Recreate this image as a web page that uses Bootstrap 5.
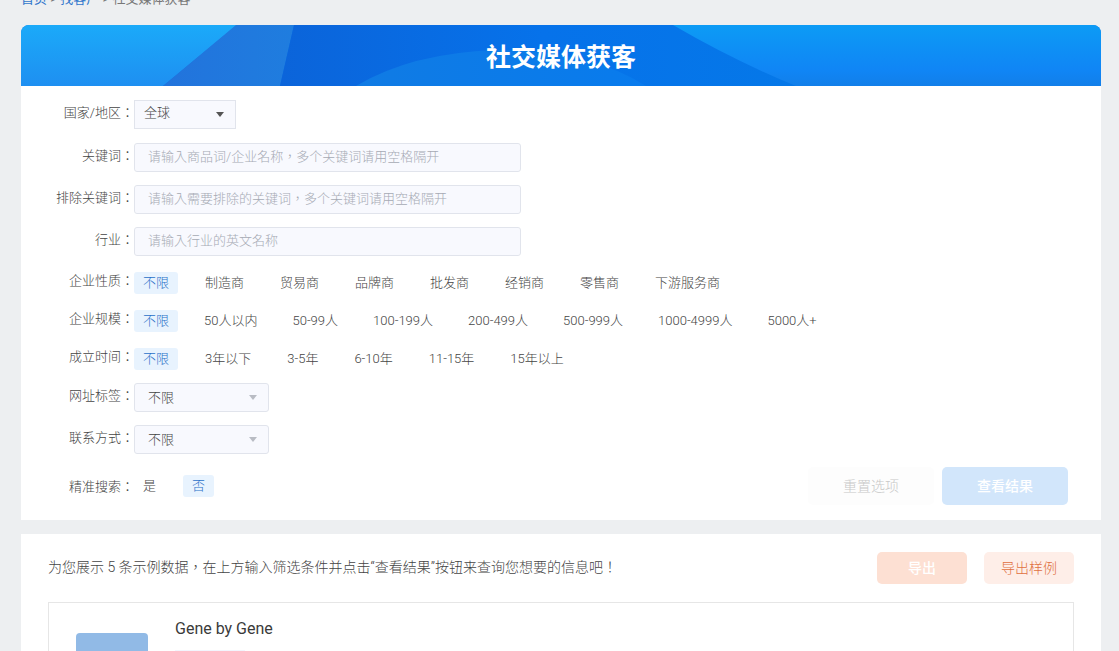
<!DOCTYPE html>
<html>
<head>
<meta charset="utf-8">
<meta name="viewport" content="width=device-width, initial-scale=1">
<title>社交媒体获客</title>
<link href="https://cdn.jsdelivr.net/npm/bootstrap@5.3.0/dist/css/bootstrap.min.css" rel="stylesheet">
<style>
  body { background: #edeff1; color: #444; font: 300 13px/22px Roboto, "Noto Sans CJK SC", sans-serif; }
  .mb-13 { margin-bottom: 13px; }
  .mb-14 { margin-bottom: 14px; }
  .page-wrap { padding: 0 18px 0 21px; }
  .crumbs { height: 25px; line-height: 20px; margin-top: -11px; margin-bottom: 11px; color: #777; font-weight: 400; }
  .crumbs a { color: #3277cc; text-decoration: none; }
  .banner { height: 61px; border-radius: 8px 8px 0 0; background: #0670e8; }
  .banner h1 { font-size: 25px; line-height: 66px; font-weight: 700; color: #fff; }
  .panel { background: #fff; }
  .filters { padding: 14px 33px 15px 0; }
  .field-label { width: 113px; flex: none; text-align: right; line-height: 24px; }
  .chip-row .field-label { line-height: 16px; }
  .colon { font-family: "Noto Sans CJK TC", sans-serif; }
  .field { height: 29px; border: 1px solid #e1e4ec; border-radius: 3px; background-color: #f8f9fe; color: #444; font-size: 13px; line-height: 19px; padding: 3px 13px 5px; font-weight: 300; }
  .field:focus { background-color: #f8f9fe; box-shadow: none; }
  .field::placeholder { color: #a6aab4; opacity: 1; font-family: Roboto, "Noto Sans CJK TC", sans-serif; }
  .text-field { width: 387px; }
  .pick { width: 135px; padding: 4px 24px 4px 13px; background-size: 8px 5px; background-position: right 11px center;
    background-image: url("data:image/svg+xml,%3Csvg xmlns='http://www.w3.org/2000/svg' viewBox='0 0 8 5'%3E%3Cpath d='M0 0h8L4 5z' fill='%23b9bcc4'/%3E%3C/svg%3E"); }
  .pick-country { width: 102px; padding: 2px 24px 6px 9px; border-radius: 0;
    background-image: url("data:image/svg+xml,%3Csvg xmlns='http://www.w3.org/2000/svg' viewBox='0 0 8 5'%3E%3Cpath d='M0 0h8L4 5z' fill='%23555555'/%3E%3C/svg%3E"); }
  .chips { gap: 0 18px; }
  .chips-tight { gap: 0 17px; }
  .chip { padding: 0 9px; line-height: 22px; border-radius: 3px; cursor: pointer; }
  .btn-check:checked + .chip { background: #e8f3fe; color: #2a70c8; }
  .act { border: 0; border-radius: 5px; padding: 0; font-size: 14px; line-height: 20px; }
  .act:disabled { opacity: 1; }
  .act-lg { width: 126px; height: 38px; }
  .act-sm { width: 90px; height: 32px; }
  .act-reset, .act-reset:disabled { background: #fdfdfd; color: #c8c8c8; font-weight: 300; }
  .act-search, .act-search:disabled { background: #d2e6fb; color: #fff; font-weight: 500; }
  .act-export, .act-export:disabled { background: #fde0d3; color: #fff; font-weight: 500; }
  .act-sample, .act-sample:hover { background: #feeee8; color: #e07040; font-weight: 300; }
  .results { margin-top: 14px; padding: 18px 27px; }
  .summary { font-size: 14px; line-height: 28px; }
  .export-bar { gap: 17px; }
  .result-item { border: 1px solid #e6e6e6; margin-top: 18px; padding: 15px 27px; height: 150px; }
  .thumb { width: 72px; height: 72px; margin-top: 15px; border-radius: 4px; background: #91bae6; }
  .item-body { margin-left: 27px; }
  .item-name { font-size: 16px; line-height: 22px; color: #3a3a3a; font-weight: 400; }
  .item-tag { width: 70px; height: 22px; margin-top: 10px; background: #f2f5fd; }
</style>
</head>
<body class="vh-100 overflow-hidden">
<div class="page-wrap">
  <nav class="crumbs" aria-label="breadcrumb"><a href="#">首页</a> &gt; <a href="#">找客户</a> &gt; 社交媒体获客</nav>

  <main>
    <section class="panel rounded-top-3">
      <div class="banner position-relative overflow-hidden">
        <svg class="position-absolute top-0 start-0 w-100 h-100" viewBox="0 0 1080 61" preserveAspectRatio="none" aria-hidden="true">
          <defs>
            <linearGradient id="sky" x1="0" y1="0" x2="0" y2="1"><stop offset="0" stop-color="#1baaf9"/><stop offset="1" stop-color="#1e8ff1"/></linearGradient>
            <linearGradient id="deep"><stop offset="0" stop-color="#0b64da"/><stop offset=".5" stop-color="#0672ea"/><stop offset="1" stop-color="#0578e8"/></linearGradient>
            <linearGradient id="fold"><stop offset="0" stop-color="#2273dc"/><stop offset="1" stop-color="#1f7ddf"/></linearGradient>
            <linearGradient id="bright" x1="0" y1="0" x2="0" y2="1"><stop offset="0" stop-color="#0c9bf5"/><stop offset=".75" stop-color="#1085f5"/><stop offset="1" stop-color="#127fe9"/></linearGradient>
            <linearGradient id="hill"><stop offset="0" stop-color="#107be4"/><stop offset="1" stop-color="#087bed"/></linearGradient>
          </defs>
          <path d="M0 0h216L142 61H0z" fill="url(#sky)"/>
          <path d="M215 0h58l-14 61H142z" fill="url(#fold)"/>
          <path d="M273 0h400l110 61H259z" fill="url(#deep)"/>
          <path d="M335 61Q390 28 475 25Q570 25 625 61z" fill="url(#hill)"/>
          <path d="M652 0h428v61H775Q712 35 652 0z" fill="url(#bright)"/>
        </svg>
        <h1 class="position-relative text-center m-0">社交媒体获客</h1>
      </div>

      <form class="filters">
        <div class="d-flex mb-14">
          <label class="field-label" for="country">国家/地区<span class="colon">：</span></label>
          <select class="form-select field pick pick-country" id="country"><option>全球</option></select>
        </div>
        <div class="d-flex mb-13">
          <label class="field-label" for="kw">关键词<span class="colon">：</span></label>
          <input class="form-control field text-field" id="kw" type="text" placeholder="请输入商品词/企业名称，多个关键词请用空格隔开">
        </div>
        <div class="d-flex mb-13">
          <label class="field-label" for="nokw">排除关键词<span class="colon">：</span></label>
          <input class="form-control field text-field" id="nokw" type="text" placeholder="请输入需要排除的关键词，多个关键词请用空格隔开">
        </div>
        <div class="d-flex mb-3">
          <label class="field-label" for="trade">行业<span class="colon">：</span></label>
          <input class="form-control field text-field" id="trade" type="text" placeholder="请输入行业的英文名称">
        </div>

        <div class="d-flex chip-row mb-3" role="radiogroup" aria-labelledby="l-kind">
          <span class="field-label" id="l-kind">企业性质<span class="colon">：</span></span>
          <div class="d-flex flex-wrap chips">
            <input class="btn-check" type="radio" name="kind" id="k0" checked><label class="chip" for="k0">不限</label>
            <input class="btn-check" type="radio" name="kind" id="k1"><label class="chip" for="k1">制造商</label>
            <input class="btn-check" type="radio" name="kind" id="k2"><label class="chip" for="k2">贸易商</label>
            <input class="btn-check" type="radio" name="kind" id="k3"><label class="chip" for="k3">品牌商</label>
            <input class="btn-check" type="radio" name="kind" id="k4"><label class="chip" for="k4">批发商</label>
            <input class="btn-check" type="radio" name="kind" id="k5"><label class="chip" for="k5">经销商</label>
            <input class="btn-check" type="radio" name="kind" id="k6"><label class="chip" for="k6">零售商</label>
            <input class="btn-check" type="radio" name="kind" id="k7"><label class="chip" for="k7">下游服务商</label>
          </div>
        </div>
        <div class="d-flex chip-row mb-3" role="radiogroup" aria-labelledby="l-size">
          <span class="field-label" id="l-size">企业规模<span class="colon">：</span></span>
          <div class="d-flex flex-wrap chips chips-tight">
            <input class="btn-check" type="radio" name="size" id="s0" checked><label class="chip" for="s0">不限</label>
            <input class="btn-check" type="radio" name="size" id="s1"><label class="chip" for="s1">50人以内</label>
            <input class="btn-check" type="radio" name="size" id="s2"><label class="chip" for="s2">50-99人</label>
            <input class="btn-check" type="radio" name="size" id="s3"><label class="chip" for="s3">100-199人</label>
            <input class="btn-check" type="radio" name="size" id="s4"><label class="chip" for="s4">200-499人</label>
            <input class="btn-check" type="radio" name="size" id="s5"><label class="chip" for="s5">500-999人</label>
            <input class="btn-check" type="radio" name="size" id="s6"><label class="chip" for="s6">1000-4999人</label>
            <input class="btn-check" type="radio" name="size" id="s7"><label class="chip" for="s7">5000人+</label>
          </div>
        </div>
        <div class="d-flex chip-row mb-13" role="radiogroup" aria-labelledby="l-age">
          <span class="field-label" id="l-age">成立时间<span class="colon">：</span></span>
          <div class="d-flex flex-wrap chips">
            <input class="btn-check" type="radio" name="age" id="a0" checked><label class="chip" for="a0">不限</label>
            <input class="btn-check" type="radio" name="age" id="a1"><label class="chip" for="a1">3年以下</label>
            <input class="btn-check" type="radio" name="age" id="a2"><label class="chip" for="a2">3-5年</label>
            <input class="btn-check" type="radio" name="age" id="a3"><label class="chip" for="a3">6-10年</label>
            <input class="btn-check" type="radio" name="age" id="a4"><label class="chip" for="a4">11-15年</label>
            <input class="btn-check" type="radio" name="age" id="a5"><label class="chip" for="a5">15年以上</label>
          </div>
        </div>

        <div class="d-flex mb-13">
          <label class="field-label" for="site">网址标签<span class="colon">：</span></label>
          <select class="form-select field pick" id="site"><option>不限</option></select>
        </div>
        <div class="d-flex mb-13">
          <label class="field-label" for="contact">联系方式<span class="colon">：</span></label>
          <select class="form-select field pick" id="contact"><option>不限</option></select>
        </div>

        <div class="d-flex align-items-center">
          <span class="field-label" id="l-exact">精准搜索<span class="colon">：</span></span>
          <div class="d-flex chips" role="radiogroup" aria-labelledby="l-exact">
            <input class="btn-check" type="radio" name="exact" id="e1"><label class="chip" for="e1">是</label>
            <input class="btn-check" type="radio" name="exact" id="e0" checked><label class="chip" for="e0">否</label>
          </div>
          <div class="d-flex gap-2 ms-auto">
            <button class="btn act act-lg act-reset" type="reset" disabled>重置选项</button>
            <button class="btn act act-lg act-search" type="submit" disabled>查看结果</button>
          </div>
        </div>
      </form>
    </section>

    <section class="panel results">
      <div class="d-flex align-items-start">
        <p class="summary m-0">为您展示 5 条示例数据<span class="colon">，</span>在上方输入筛选条件并点击“查看结果”按钮来查询您想要的信息吧<span class="colon">！</span></p>
        <div class="d-flex export-bar ms-auto">
          <button class="btn act act-sm act-export" type="button" disabled>导出</button>
          <button class="btn act act-sm act-sample" type="button">导出样例</button>
        </div>
      </div>
      <article class="result-item d-flex">
        <div class="thumb"></div>
        <div class="item-body">
          <h2 class="item-name m-0">Gene by Gene</h2>
          <div class="item-tag"></div>
        </div>
      </article>
    </section>
  </main>
</div>
<script src="https://cdn.jsdelivr.net/npm/bootstrap@5.3.0/dist/js/bootstrap.bundle.min.js"></script>
</body>
</html>
